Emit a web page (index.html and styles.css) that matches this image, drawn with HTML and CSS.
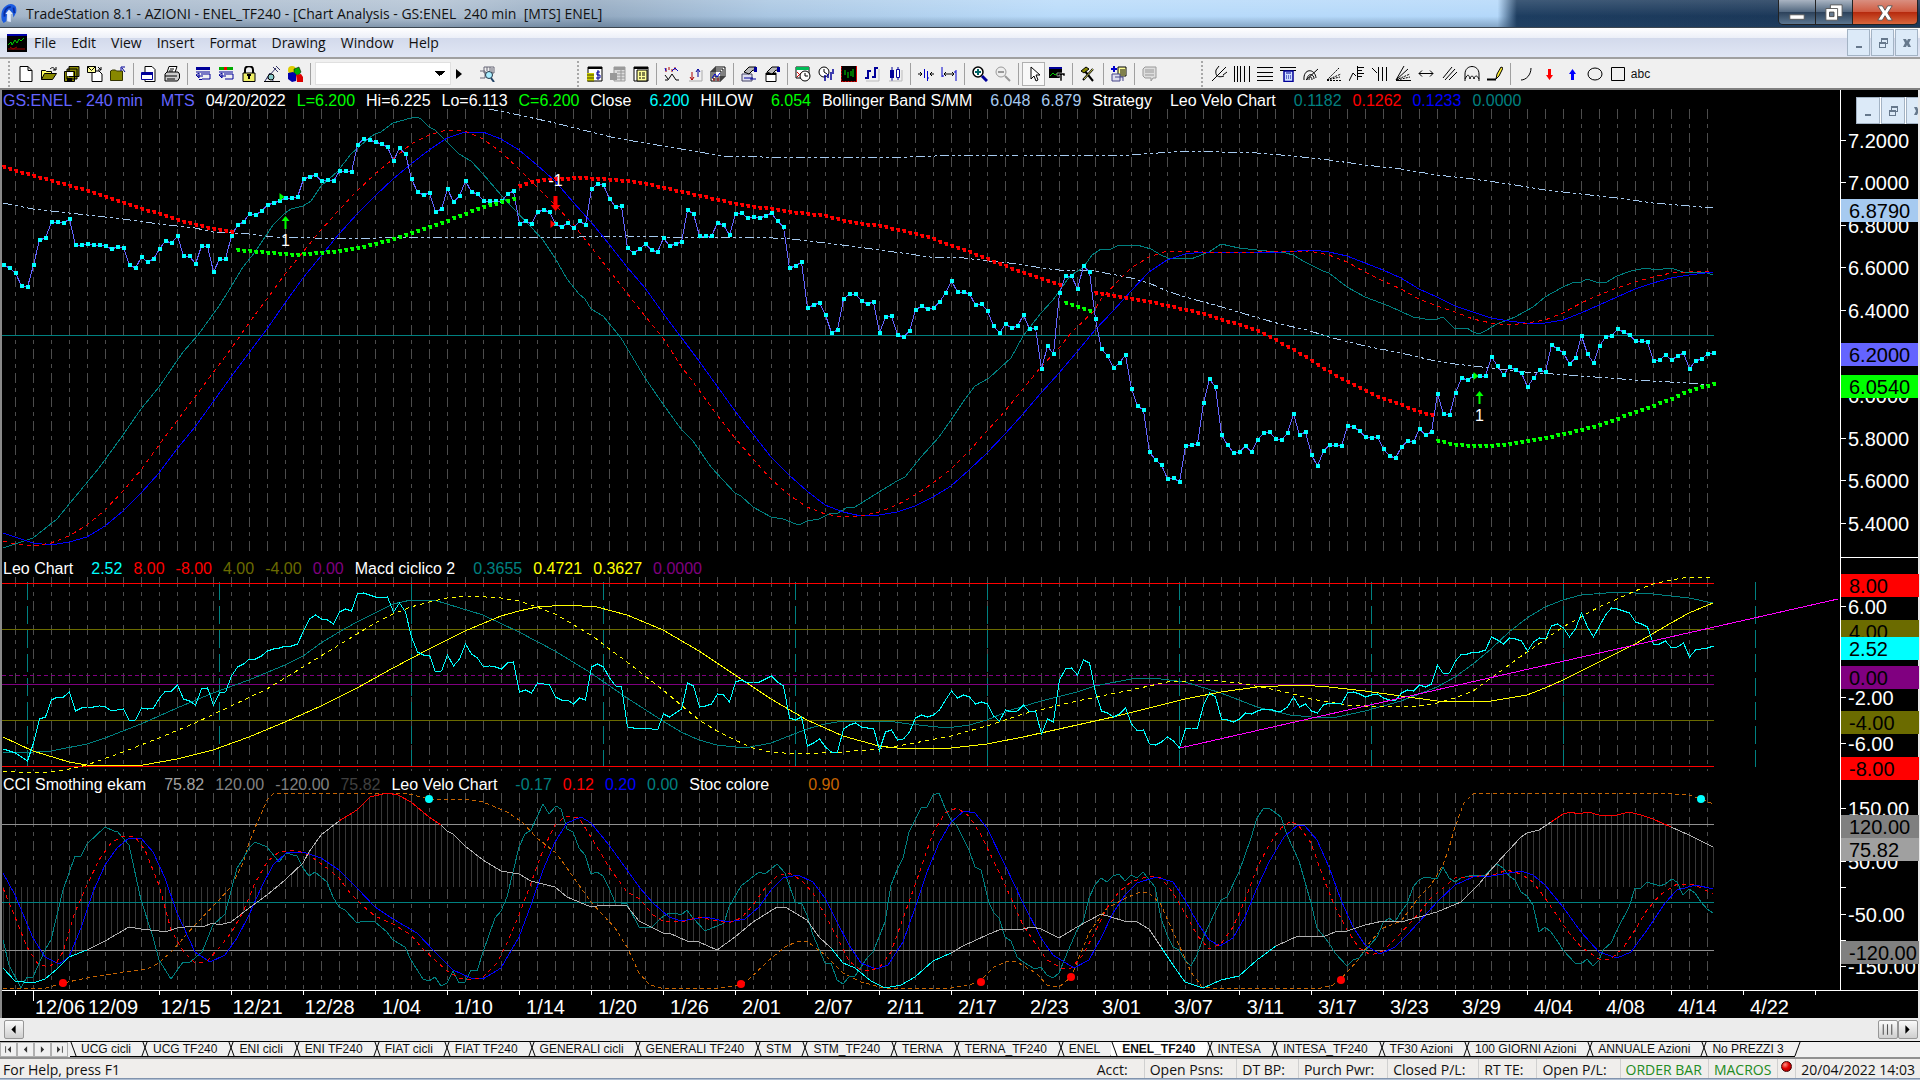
FILE: index.html
```html
<!DOCTYPE html>
<html lang="en">
<head>
  <meta charset="UTF-8" />
  <title>TradeStation 8.1 - AZIONI - ENEL_TF240</title>
  <link rel="stylesheet" href="styles.css">
</head>
<body>

  <!-- window title -->
  <header class="titlebar">
    <svg class="logo" viewBox="0 0 20 24"><path d="M2 19C0 9 4 2 12 1c5 0 7 4 6 9l-3 6-1-5-3-3-3 3-1 9-3 2z" fill="#1a5ae0"/><path d="M5 15C4 9 7 4 12 4M15 5l1 6" stroke="#0a2c9c" stroke-width="2" fill="none"/><path d="M8 20v-8H6l4-5 4 5h-2v9z" fill="#dfeaff"/></svg>
    <h1>TradeStation 8.1 - AZIONI - ENEL_TF240 - [Chart Analysis - GS:ENEL&nbsp; 240 min&nbsp; [MTS] ENEL]</h1>
    <div class="window-buttons">
      <button aria-label="Minimize"><svg viewBox="0 0 20 20"><path d="M2 12h16v5H2z" fill="#fff" stroke="#555"/></svg></button>
      <button aria-label="Restore"><svg viewBox="0 0 20 20"><path d="M6 1h13v13H6z" fill="#fff" stroke="#555"/><path d="M1 5h13v13H1z" fill="#fff" stroke="#555"/><path d="M5 9h5v5H5z" fill="#667a90" stroke="#444"/></svg></button>
      <button class="close" aria-label="Close"><svg viewBox="0 0 20 20"><path d="M2 2h5l3 5 3-5h5l-5 8 5 8h-5l-3-5-3 5H2l5-8z" fill="#fff" stroke="#555"/></svg></button>
    </div>
  </header>

  <!-- menu -->
  <nav class="menubar">
    <svg class="doc-icon" viewBox="0 0 20 18"><path d="M0 0h20v18H0z" fill="#000"/><path d="M0 0h20v2H0z" fill="#00a"/><path d="M1 11l3-3 1 3 3-5 2 3 2-4 2 2 3-3" stroke="#0c0" fill="none"/><path d="M1 15h17M3 13l3 2 4-2" stroke="#900" fill="none"/></svg>
    <a href="#">File</a>
    <a href="#">Edit</a>
    <a href="#">View</a>
    <a href="#">Insert</a>
    <a href="#">Format</a>
    <a href="#">Drawing</a>
    <a href="#">Window</a>
    <a href="#">Help</a>
    <div class="mdi-buttons">
      <button aria-label="Minimize chart"><svg viewBox="0 0 12 12"><path d="M3 9h6v2H3z"/></svg></button>
      <button aria-label="Restore chart"><svg viewBox="0 0 12 12"><path d="M4 1h7v6H9v4H2V5h2zM5 3v2h4v1h1V3zM3 7v3h5V7z" fill-rule="evenodd"/></svg></button>
      <button aria-label="Close chart"><svg viewBox="0 0 12 12"><path d="M2 2h3l1 2 1-2h3L8 6l2 4H7L6 8l-1 2H2l2-4z"/></svg></button>
    </div>
  </nav>

  <!-- toolbars -->
  <div class="toolbars">
    <div class="toolbar bar-file">
      <i class="grip"></i>
      <button aria-label="New"><svg viewBox="0 0 16 16"><path d="M2 .5h8l4 4v11H2zM10 .5v4h4" fill="#fff" stroke="#000"/></svg></button>
      <button aria-label="Open"><svg viewBox="0 0 16 16"><path d="M.5 13.5v-9h4l1 1h5v2" fill="#ff6" stroke="#000"/><path d="M.5 13.5l3-6h12l-4 6z" fill="#880" stroke="#000"/><path d="M9 3c2-2 4-2 5 1M12 4h3V1" fill="none" stroke="#000"/></svg></button>
      <button aria-label="Save all"><svg viewBox="0 0 16 16"><path d="M5 .5h10v10H5z M3 3h10v10H3z M.5 5.500h10v10h-10z" fill="#880" stroke="#000"/><path d="M3 6h6v4H3z" fill="#fff"/><path d="M3 12h5v3H3z" fill="#000"/></svg></button>
      <button aria-label="Mail"><svg viewBox="0 0 16 16"><path d="M5 5h7l3 3v7.500H5z" fill="#fff" stroke="#000"/><path d="M.5.5h8v6h-8z" fill="#ff9" stroke="#000"/><path d="M.5.5l4 4 4-4M11 1l3 3M14 1v3h-3" fill="none" stroke="#000"/></svg></button>
      <button aria-label="Folder up"><svg viewBox="0 0 16 16"><path d="M.5 14.500V5l2-1h3l1 1h6v9.500z" fill="#880" stroke="#330"/><path d="M15 6l-3-4M11 5V1h4" fill="none" stroke="#009"/></svg></button>
      <i class="sep"></i>
      <button aria-label="Preview"><svg viewBox="0 0 16 16"><path d="M4 .5h7l3 3v12H4z" fill="#fff" stroke="#000"/><path d="M.5 6.500h11v7H.5z" fill="#fff" stroke="#009"/><path d="M1 6h11v3H1z" fill="#009"/></svg></button>
      <button aria-label="Print"><svg viewBox="0 0 16 16"><path d="M5 .5h8l-2 6H3z" fill="#fff" stroke="#000"/><path d="M1 8l2-2h11l1.500 2v4l-2 3H1z" fill="#ccc" stroke="#000"/><path d="M1 10h12M3 13h8M6 3h4M5 5h4" stroke="#000"/></svg></button>
      <i class="sep"></i>
      <button aria-label="Undo list"><svg viewBox="0 0 16 16"><path d="M1 1h14v3H1z" fill="#009"/><path d="M1 6h14M6 8h9v5H7M7 13.500H4M1 9l3-2v5zM2 10l6 0" fill="none" stroke="#009"/></svg></button>
      <button aria-label="Color list"><svg viewBox="0 0 16 16"><path d="M1 1h14v3H1z" fill="#0a0"/><path d="M6 1h3v3H6z" fill="#e00"/><path d="M1 6h14M6 8h9v5H7M1 9l3-2v5zM2 10h6" fill="none" stroke="#009"/></svg></button>
      <button aria-label="Lock"><svg viewBox="0 0 16 16"><path d="M4 7V4c0-5 8-5 8 0v3" fill="none" stroke="#000" stroke-width="2"/><path d="M2 7h12v8.500H2z" fill="#ee6" stroke="#000"/><path d="M6 9h4M8 9v4" stroke="#000" stroke-width="2"/></svg></button>
      <button aria-label="Signal"><svg viewBox="0 0 16 16"><path d="M1 15l5-8 3 8M5 10l7-8M9 1l5 5M12 0l4 4M3 12h6" fill="none" stroke="#336"/><circle cx="7" cy="11" r="3" fill="#8cc" stroke="#000"/><path d="M0 15.500h16" stroke="#000"/></svg></button>
      <button aria-label="Blocks"><svg viewBox="0 0 16 16"><circle cx="5" cy="4" r="4" fill="#dc0"/><path d="M7 3l5-2 2 5-3 4-4-2z" fill="#0a0" stroke="#000" stroke-width=".5"/><path d="M1 7l5-1 3 2v7l-4 1-4-3z" fill="#00a"/><path d="M9 9l5-1 2 3v5h-6z" fill="#d00"/></svg></button>
      <i class="sep"></i>
      <select aria-label="Symbol"><option></option></select>
      <button class="narrow" aria-label="Go"><svg viewBox="0 0 16 16"><path d="M5 3l6 5-6 5z"/></svg></button>
      <button aria-label="Find symbol"><svg viewBox="0 0 16 16"><path d="M1 5h5v7H1M5 1h10v6H5zM8 1v4M11 1v4M13 2v5" fill="#eee" stroke="#667"/><circle cx="10" cy="9" r="3.500" fill="#aef" stroke="#234"/><path d="M12 12l3 4" stroke="#246" stroke-width="2"/></svg></button>
    </div>

    <div class="toolbar bar-chart">
      <i class="grip"></i>
      <button aria-label="Data"><svg viewBox="0 0 16 16"><path d="M1 1h14v14H1z" fill="#fff" stroke="#000"/><path d="M1 1h14v2H1z"/><path d="M0 7h7v8H0z" fill="#cc0"/><path d="M0 9h7M0 12h7M0 15h7" stroke="#440"/><path d="M13 6h-3v3h3v3h-4M11 4v10" fill="none" stroke="#009"/></svg></button>
      <button aria-label="Table" disabled><svg viewBox="0 0 16 16"><path d="M4 1h11v14H4z" fill="#ddd" stroke="#999"/><path d="M4 1h11v3H4zM0 7h7v7H0z" fill="#999"/><path d="M7 6h8M7 9h8M7 12h8M11 4v11" stroke="#999"/></svg></button>
      <button aria-label="Grid"><svg viewBox="0 0 16 16"><path d="M1 1h14v14H1z" fill="#fff" stroke="#000"/><path d="M1 1h14v2H1z"/><path d="M4 4h10v11H4z" fill="#ff9" stroke="#000"/><path d="M6 7h2M9 7h3M6 9h2M9 9h3M6 12h2M9 12h3" stroke="#000"/></svg></button>
      <i class="sep"></i>
      <button aria-label="Indicator"><svg viewBox="0 0 16 16"><path d="M2 2v4M5 1v3M8 3v3M11 1v3" stroke="#a00"/><path d="M1 2l1 3M8 5l3-3 3 3" stroke="#00c" fill="none"/><path d="M1 14h3l4-6 4 6h3M1 9l3 4" stroke="#000" fill="none"/></svg></button>
      <button aria-label="Strategy"><svg viewBox="0 0 16 16"><path d="M5 6v8M3 11l2 3 2-3" stroke="#a00" fill="none"/><path d="M11 3v8M9 6l2-3 2 3" stroke="#009" fill="none"/><path d="M2 15h13V4" stroke="#aaa" fill="none"/></svg></button>
      <button aria-label="Layers"><svg viewBox="0 0 16 16"><path d="M5 1h10v10H5zM3 3h10v10H3zM1 5h10v10H1z" fill="#fff" stroke="#000"/><path d="M2 12l3-4 2 3 3-4" stroke="#00c" fill="none"/><path d="M4 12v3M8 12v3" stroke="#a00"/></svg></button>
      <i class="sep"></i>
      <button aria-label="Format symbol"><svg viewBox="0 0 16 16"><path d="M1 8h10v7H1z" fill="#dde" stroke="#446"/><path d="M3 6l5-5h7v4l-3-1-4 4z" fill="#bbb" stroke="#000"/><path d="M13 1h3v5h-3z" fill="#009"/><path d="M3 12h9M9 13h6" stroke="#009"/></svg></button>
      <button aria-label="Format window"><svg viewBox="0 0 16 16"><path d="M2 7h10v8.500H2z" fill="#fff" stroke="#000"/><path d="M2 7h10v2H2z"/><path d="M3 6l5-5h7v4l-3-1-4 4z" fill="#bbb" stroke="#000"/><path d="M13 1h3v5h-3z" fill="#009"/></svg></button>
      <i class="sep"></i>
      <button aria-label="Calendar"><svg viewBox="0 0 16 16"><path d="M1 1h13v11H1z" fill="#fff" stroke="#000"/><path d="M1 1h13v3H1z" fill="#0b5"/><path d="M2 6l5 5M7 6l-5 5" stroke="#d00"/><circle cx="10" cy="10" r="5" fill="#fff" stroke="#000"/><path d="M10 7v3h3" stroke="#000" fill="none"/></svg></button>
      <button aria-label="Session time"><svg viewBox="0 0 16 16"><circle cx="6" cy="6" r="5" fill="#fff" stroke="#000"/><path d="M6 3v3l3 2" stroke="#000" fill="none"/><path d="M7 9v6M10 8v4M13 6v8M15 3v5" stroke="#009" stroke-width="1.500"/></svg></button>
      <button aria-label="Bars"><svg viewBox="0 0 16 16"><path d="M0 0h16v16H0z" fill="#000"/><path d="M.5.5v15h15" stroke="#d00" fill="none" stroke-dasharray="2 1"/><path d="M15.500 0v16" stroke="#d00"/><path d="M4 4v5M7 6v6M10 5v5M12 3v8" stroke="#0d0"/></svg></button>
      <button aria-label="OHLC"><svg viewBox="0 0 16 16"><path d="M4 4v9M1 12h3M4 5h3M11 1v11M8 11h3M11 2h3" stroke="#009" stroke-width="2"/><path d="M15 3v12H2" stroke="#bbb" fill="none"/></svg></button>
      <button aria-label="Candles"><svg viewBox="0 0 16 16"><path d="M5 1v14M11 1v13" stroke="#009"/><path d="M3 4h4v8H3z" fill="#009"/><path d="M9.500 3.500h3v8h-3z" fill="#fff" stroke="#009"/><path d="M15 4v11H2" stroke="#bbb" fill="none"/></svg></button>
      <i class="sep"></i>
      <button aria-label="Tighter bars"><svg viewBox="0 0 16 16"><path d="M0 8h4M2 6l2 2-2 2M16 8h-4M14 6l-2 2 2 2" stroke="#000" fill="none"/><path d="M6.500 3v9M9.500 5v10M9 12h2" stroke="#00c"/></svg></button>
      <button aria-label="Wider bars"><svg viewBox="0 0 16 16"><path d="M3 8h10M5 6L3 8l2 2M11 6l2 2-2 2" stroke="#000" fill="none"/><path d="M1 1v10M1 10h2M15 4v11M13 6h2" stroke="#00c"/></svg></button>
      <i class="sep"></i>
      <button aria-label="Zoom in"><svg viewBox="0 0 16 16"><circle cx="6" cy="6" r="5" fill="#fff" stroke="#000" stroke-width="1.500"/><path d="M3 6h6M6 3v6" stroke="#066" stroke-width="2"/><path d="M10 10l5 5" stroke="#009" stroke-width="3"/></svg></button>
      <button aria-label="Zoom out" disabled><svg viewBox="0 0 16 16"><circle cx="6" cy="6" r="5" fill="#eee" stroke="#999"/><path d="M3 6h6" stroke="#999" stroke-width="2"/><path d="M10 10l5 5" stroke="#999" stroke-width="2"/></svg></button>
      <i class="sep"></i>
      <button class="pressed" aria-label="Pointer"><svg viewBox="0 0 16 16"><path d="M5 1v12l3-3 2 5 2-1-2-5h4z" fill="#fff" stroke="#000"/></svg></button>
      <button aria-label="Chart text"><svg viewBox="0 0 16 16"><path d="M0 1h13v11H0z" fill="#000"/><path d="M0 1h13v2H0z" fill="#009"/><path d="M1 10l3-3 2 2 3-2 3 2" stroke="#0c0" fill="none"/><path d="M8 7h8v3h-2V9h-1v6h-2V9h-1v1H8z" stroke="#fff" stroke-width=".5"/></svg></button>
      <i class="sep"></i>
      <button aria-label="Tools"><svg viewBox="0 0 16 16"><path d="M4 4l9 11M13 3L3 14" stroke="#000" stroke-width="2"/><path d="M1 5l5-4 3 2-5 4z" fill="#880" stroke="#000"/><path d="M13 3L4 13" stroke="#cc5"/></svg></button>
      <i class="sep"></i>
      <button aria-label="Add grid"><svg viewBox="0 0 16 16"><path d="M7 1h8v9H7z" fill="#ff9" stroke="#000"/><path d="M9 4h5M9 6h5M9 8h5" stroke="#000"/><path d="M0 3h6M3 0v6" stroke="#00c" stroke-width="2"/><path d="M1 8h8v7H1zM4 11h8v4" fill="#dde" stroke="#448"/></svg></button>
      <i class="sep"></i>
      <button aria-label="Notes" disabled><svg viewBox="0 0 16 16"><path d="M3 1h11v11h-3l-2 3v-3H3l-2-2V3z" fill="#ddd" stroke="#999"/><path d="M3 4h9M3 6h9M3 9h9" stroke="#999"/></svg></button>
    </div>

    <div class="toolbar bar-draw">
      <i class="grip"></i>
      <button aria-label="Pitchfork"><svg viewBox="0 0 16 16"><path d="M1 15L8 8M5 4c-1 6 2 8 8 6M6 10l9-9M5 4l3-4M12 9l4-3" stroke="#000" fill="none"/></svg></button>
      <button aria-label="Time lines"><svg viewBox="0 0 16 16"><path d="M.5 0v16M3.500 0v16M6.500 0v16M10.500 0v16M15.500 0v16" stroke="#000"/></svg></button>
      <button aria-label="Price lines"><svg viewBox="0 0 16 16"><path d="M0 1.500h16M0 6.500h16M0 10.500h16M0 14.500h16" stroke="#000"/></svg></button>
      <button aria-label="Calculator"><svg viewBox="0 0 16 16"><path d="M0 1.500h16M0 4.500h16" stroke="#000"/><path d="M4 5h9v10.500H4z" fill="#cdf" stroke="#009" stroke-width="1.500"/><path d="M6 7h5M6 10h1M8 10h1M10 10h1M6 12h1M8 12h1M10 12h1" stroke="#009"/></svg></button>
      <button aria-label="Arcs"><svg viewBox="0 0 16 16"><path d="M1 14C0 2 12 2 13 12M4 14c0-7 7-7 7-1M6 14c0-4 3-4 3 0M3 14L15 3" stroke="#000" fill="none"/></svg></button>
      <button aria-label="Speed lines"><svg viewBox="0 0 16 16"><path d="M1 14.500h14M1 14L13 2M1 14L15 8M1 14l13-3" stroke="#000" stroke-dasharray="2 1"/></svg></button>
      <button aria-label="Retracement"><svg viewBox="0 0 16 16"><path d="M0 15l4-8 3 3M8.500 0v14M8 1.500h7M8 4.500h5M8 7.500h7M8 10.500h5" stroke="#000" fill="none"/></svg></button>
      <button aria-label="Time ratio"><svg viewBox="0 0 16 16"><path d="M0 2l5 5M6.500 1v14M10.500 1v14M14.500 1v14" stroke="#000" fill="none"/></svg></button>
      <button aria-label="Fan"><svg viewBox="0 0 16 16"><path d="M1 14.500h15M1 14L9 0M1 14L13 3" stroke="#000"/><path d="M1 14L15 8M2 14l13-3" stroke="#000" stroke-dasharray="2 1"/></svg></button>
      <button aria-label="Extend"><svg viewBox="0 0 16 16"><path d="M1 7.500h14M4 4.500l-3 3 3 3M12 4.500l3 3-3 3" stroke="#000" fill="none"/></svg></button>
      <button aria-label="Channel"><svg viewBox="0 0 16 16"><path d="M2 12L11 1M4 14L14 3M8 14l8-8" stroke="#000"/></svg></button>
      <button aria-label="Cycle"><svg viewBox="0 0 16 16"><path d="M1 15V8c0-10 14-10 14 0v7M1 13c3-6 4-4 5 0 1-4 3-4 4 0 1-4 3-4 5 0" stroke="#000" fill="none"/></svg></button>
      <button aria-label="Pencil"><svg viewBox="0 0 16 16"><path d="M0 13.500h9" stroke="#000" stroke-width="2"/><path d="M9 13l1-5 4-7 2 1-4 8z" fill="#fe3" stroke="#000"/></svg></button>
      <i class="sep"></i>
      <button aria-label="Arc"><svg viewBox="0 0 16 16"><path d="M3 14c5 0 10-5 10-12" stroke="#000" fill="none"/></svg></button>
      <button aria-label="Down arrow"><svg viewBox="0 0 16 16"><path d="M7 3h3v6h2l-3.500 5L5 9h2z" fill="#f00"/></svg></button>
      <button aria-label="Up arrow"><svg viewBox="0 0 16 16"><path d="M7 14h3V8h2L8.500 3 5 8h2z" fill="#00f"/></svg></button>
      <button aria-label="Ellipse"><svg viewBox="0 0 16 16"><ellipse cx="8" cy="8" rx="7" ry="6" stroke="#000" fill="none"/></svg></button>
      <button aria-label="Rectangle"><svg viewBox="0 0 16 16"><path d="M1.500 1.500h13v13h-13z" stroke="#000" fill="none"/></svg></button>
      <button class="text-tool">abc</button>
    </div>
  </div>

  <!-- chart analysis window -->
  <main class="chart">
    <section class="panel panel-price">
      <svg id="price"></svg>
      <div class="legend">
        <span class="violet">GS:ENEL - 240 min</span>
        <span class="violet wide">MTS</span>
        <span>04/20/2022</span>
        <span class="lime">L=6.200</span>
        <span>Hi=6.225</span>
        <span>Lo=6.113</span>
        <span class="lime">C=6.200</span>
        <span>Close</span>
        <span class="cyan wide">6.200</span>
        <span>HILOW</span>
        <span class="lime wide">6.054</span>
        <span>Bollinger Band S/MM</span>
        <span class="sky wide">6.048</span>
        <span class="sky">6.879</span>
        <span>Strategy</span>
        <span class="wide">Leo Velo Chart</span>
        <span class="teal wide">0.1182</span>
        <span class="red">0.1262</span>
        <span class="blue">0.1233</span>
        <span class="teal">0.0000</span>
      </div>
      <div class="mdi-buttons floating">
        <button aria-label="Minimize panel"><svg viewBox="0 0 12 12"><path d="M3 9h6v2H3z"/></svg></button>
        <button aria-label="Restore panel"><svg viewBox="0 0 12 12"><path d="M4 1h7v6H9v4H2V5h2zM5 3v2h4v1h1V3zM3 7v3h5V7z" fill-rule="evenodd"/></svg></button>
        <button aria-label="Close panel"><svg viewBox="0 0 12 12"><path d="M2 2h3l1 2 1-2h3L8 6l2 4H7L6 8l-1 2H2l2-4z"/></svg></button>
      </div>
    </section>

    <section class="panel panel-leo">
      <svg id="leo"></svg>
      <div class="legend">
        <span>Leo Chart</span>
        <span class="cyan wide">2.52</span>
        <span class="red">8.00</span>
        <span class="red">-8.00</span>
        <span class="olive">4.00</span>
        <span class="olive">-4.00</span>
        <span class="purple">0.00</span>
        <span>Macd ciclico 2</span>
        <span class="teal wide">0.3655</span>
        <span class="yellow">0.4721</span>
        <span class="yellow">0.3627</span>
        <span class="purple">0.0000</span>
      </div>
    </section>

    <section class="panel panel-cci">
      <svg id="cci"></svg>
      <div class="legend">
        <span>CCI Smothing ekam</span>
        <span class="silver wide">75.82</span>
        <span class="gray">120.00</span>
        <span class="gray">-120.00</span>
        <span class="dark">75.82</span>
        <span>Leo Velo Chart</span>
        <span class="teal wide">-0.17</span>
        <span class="red">0.12</span>
        <span class="blue">0.20</span>
        <span class="teal">0.00</span>
        <span>Stoc colore</span>
        <span class="orange wider">0.90</span>
      </div>
    </section>

    <svg id="dates"></svg>
  </main>

  <div class="scrollbar">
    <button aria-label="Scroll left"><svg viewBox="0 0 16 16"><path d="M10 4v8L6 8z"/></svg></button>
    <span class="track"></span>
    <button class="thumb" aria-label="Scroll thumb"><svg viewBox="0 0 16 16"><path d="M4 3v10M8 3v10M12 3v10" stroke="#555"/></svg></button>
    <button aria-label="Scroll right"><svg viewBox="0 0 16 16"><path d="M6 4v8l4-4z"/></svg></button>
  </div>

  <div class="tabs">
    <button class="nav" aria-label="First"><svg viewBox="0 0 16 16"><path d="M11 4v8L7 8zM4 4h1v8H4z"/></svg></button>
    <button class="nav" aria-label="Previous"><svg viewBox="0 0 16 16"><path d="M10 4v8L6 8z"/></svg></button>
    <button class="nav" aria-label="Next"><svg viewBox="0 0 16 16"><path d="M6 4v8l4-4z"/></svg></button>
    <button class="nav" aria-label="Last"><svg viewBox="0 0 16 16"><path d="M5 4v8l4-4zM11 4h1v8h-1z"/></svg></button>
    <div class="tab-list">
      <button class="tab">UCG cicli</button>
      <button class="tab">UCG TF240</button>
      <button class="tab">ENI cicli</button>
      <button class="tab">ENI TF240</button>
      <button class="tab">FIAT cicli</button>
      <button class="tab">FIAT TF240</button>
      <button class="tab">GENERALI cicli</button>
      <button class="tab">GENERALI TF240</button>
      <button class="tab">STM</button>
      <button class="tab">STM_TF240</button>
      <button class="tab">TERNA</button>
      <button class="tab">TERNA_TF240</button>
      <button class="tab">ENEL</button>
      <button class="tab active">ENEL_TF240</button>
      <button class="tab">INTESA</button>
      <button class="tab">INTESA_TF240</button>
      <button class="tab">TF30 Azioni</button>
      <button class="tab">100 GIORNI Azioni</button>
      <button class="tab">ANNUALE Azioni</button>
      <button class="tab">No PREZZI 3</button>
    </div>
  </div>

  <footer class="status">
    <span class="help">For Help, press F1</span>
    <span class="acct">Acct:</span>
    <span>Open Psns:</span>
    <span>DT BP:</span>
    <span>Purch Pwr:</span>
    <span>Closed P/L:</span>
    <span>RT TE:</span>
    <span>Open P/L:</span>
    <span class="green">ORDER BAR</span>
    <span class="green">MACROS</span>
    <span class="lamp"><i></i></span>
    <span class="clock">20/04/2022 14:03</span>
  </footer>
  <div class="taskbar"></div>

  <script src="chart.js"></script>
</body>
</html>
```
FILE: styles.css
```css
* {
  box-sizing: border-box;
}
body {
  margin: 0;
  height: 100vh;
  display: flex;
  flex-direction: column;
  overflow: hidden;
  background-color: #f0f0f0;
  font-family: 'Open Sans', 'Noto Sans', sans-serif;
  font-size: 14px;
  color: #111;
}
button {
  border: 0;
  padding: 0;
  background: none;
  font: inherit;
  color: inherit;
}
a {
  color: inherit;
  text-decoration: none;
}

/* title bar */
.titlebar {
  flex: none;
  height: 28px;
  display: flex;
  align-items: center;
  background:
    linear-gradient(to bottom, rgba(255,255,255,0.15), rgba(255,255,255,0) 60%, rgba(40,70,100,0.35)),
    linear-gradient(to right, #a3b5c9, #b3c3d4 22%, #93a9c0 31%, #a9c6e2 40%, #b9dbfa 55%, #b4d8fa 78%, #1d3d60 79%, #1a3555);
  border-bottom: 1px solid #3c4650;
}
.logo {
  width: 18px;
  height: 24px;
  margin-right: 8px;
}
.titlebar h1 {
  margin: 0;
  flex: 1;
  font-size: 14px;
  font-weight: normal;
  line-height: 28px;
  white-space: nowrap;
}
.window-buttons {
  display: flex;
  align-self: flex-start;
  height: 25px;
  margin-right: 2px;
  border: 1px solid #222;
  border-top: 0;
  border-radius: 0 0 5px 5px;
  overflow: hidden;
}
.window-buttons button {
  width: 37px;
  background: linear-gradient(#a9b4c2, #51677f 50%, #2b4059 50%, #5c7690);
  border-right: 1px solid #222;
}
.window-buttons button.close {
  width: 64px;
  border-right: 0;
  background: linear-gradient(#d98f80, #cf5a40 50%, #b5280c 50%, #d8663c);
}
.window-buttons svg {
  width: 18px;
  height: 18px;
  vertical-align: middle;
}

/* menu */
.menubar {
  flex: none;
  height: 31px;
  display: flex;
  align-items: center;
  gap: 15px;
  background: linear-gradient(#ffffff, #eceff8 34%, #d3daec 36%, #e0e6f4 96%);
  border-bottom: 2px solid #a0a0a0;
}
.doc-icon {
  width: 20px;
  height: 18px;
  margin: 0 -8px 0 7px;
}
.mdi-buttons {
  display: flex;
  gap: 1px;
  height: 27px;
  margin-left: auto;
  margin-right: 2px;
}
.mdi-buttons button {
  width: 23px;
  background-color: #dceaf8;
  border: 1px solid #a3b3c4;
}
.mdi-buttons svg {
  display: block;
  width: 12px;
  height: 12px;
  margin: auto;
  fill: #66788c;
}
.mdi-buttons.floating {
  position: absolute;
  top: 7px;
  right: -14px;
  background-color: #fff;
}
.mdi-buttons.floating button {
  width: 24px;
}

/* toolbars */
.toolbars {
  flex: none;
  height: 31px;
  display: flex;
  background-color: #f0f0f0;
  border-bottom: 2px solid #808080;
}
.toolbar {
  display: flex;
  align-items: center;
}
.toolbar button {
  flex: none;
  width: 23px;
  height: 24px;
}
.toolbar svg {
  display: block;
  width: 16px;
  height: 16px;
  margin: auto;
}
.toolbar button.narrow {
  width: 16px;
  margin-right: 8px;
}
.toolbar button.pressed {
  border: 1px solid #b0b0b0;
  background-color: #f8f8f8;
}
.toolbar button.text-tool {
  font-family: 'Liberation Sans', Arial, sans-serif;
  font-size: 12px;
}
.toolbar select {
  width: 136px;
  height: 23px;
  margin-left: 1px;
  appearance: none;
  border: 1px solid #e0e0e0;
  border-radius: 0;
  background:
    conic-gradient(from -45deg at 50% 100%, #000 90deg, #fff 0) right 5px center / 10px 5px no-repeat,
    #fff;
}
.bar-file {
  margin-left: 8px;
  margin-right: 79px;
}
.bar-draw {
  margin-left: 40px;
}
.grip {
  width: 3px;
  height: 26px;
  margin-right: 3px;
  border-left: 2px dotted #a8a8a8;
}
.sep {
  width: 1px;
  height: 22px;
  margin: 0 3px 0 4px;
  background-color: #a0a0a0;
}

/* chart */
.chart {
  flex: 1;
  min-height: 0;
  display: flex;
  flex-direction: column;
  background-color: #000;
  border-left: 2px solid #8a8a8a;
  border-right: 2px solid #e8e8e8;
  font-family: 'Liberation Sans', Arial, sans-serif;
  color: #fff;
}
.panel {
  position: relative;
  min-height: 0;
}
.panel-price {
  flex: 468;
  overflow: hidden;
}
.panel-leo,
.panel-cci {
  flex: 216;
}
.panel > svg {
  display: block;
  width: 100%;
  height: 100%;
  overflow: visible;
}
#dates {
  display: block;
  flex: none;
  width: 100%;
  height: 28px;
}
.chart text {
  fill: #fff;
  font-size: 20px;
}
.chart text.small {
  font-size: 16px;
}
.chart text.on-tag {
  fill: #000;
}
.legend {
  position: absolute;
  top: 1px;
  left: 1px;
  display: flex;
  gap: 11px;
  font-size: 16px;
  line-height: 20px;
  white-space: nowrap;
}
.legend .wide {
  margin-left: 7px;
}
.legend .wider {
  margin-left: 28px;
}
.violet { color: #6464ff; }
.lime { color: #00ff00; }
.cyan { color: #00ffff; }
.sky { color: #a6caf0; }
.teal { color: #008080; }
.red { color: #ff0000; }
.blue { color: #0000ff; }
.olive { color: #6b6b00; }
.purple { color: #800080; }
.yellow { color: #ffff00; }
.silver { color: #a0a0a0; }
.gray { color: #808080; }
.dark { color: #404040; }
.orange { color: #c86400; }

/* scrollbar */
.scrollbar {
  flex: none;
  height: 23px;
  display: flex;
  align-items: center;
  padding: 0 2px 0 4px;
  background-color: #ececec;
}
.scrollbar .track {
  flex: 1;
}
.scrollbar button {
  width: 20px;
  height: 19px;
  border: 1px solid #979797;
  border-radius: 2px;
  background: linear-gradient(#fafafa, #cfcfcf);
}
.scrollbar svg {
  display: block;
  width: 17px;
}

/* workspace tabs */
.tabs {
  flex: none;
  height: 18px;
  display: flex;
  border-top: 1px solid #000;
  border-bottom: 2px solid #909090;
  font-family: 'Liberation Sans', Arial, sans-serif;
  font-size: 12px;
  line-height: 14px;
  white-space: nowrap;
}
.tabs .nav {
  width: 17px;
  border: 1px solid #b0b0b0;
  fill: #333;
}
.tabs .nav svg {
  display: block;
  height: 13px;
  margin: auto;
}
.tab-list {
  display: flex;
  margin-left: 2px;
}
.tab {
  position: relative;
  padding: 0 11px;
  border-bottom: 1px solid #000;
}
.tab::before,
.tab::after {
  content: "";
  position: absolute;
  top: 0;
  bottom: 0;
  width: 1px;
  background-color: #000;
}
.tab::before {
  left: 3px;
  transform: skewX(20deg);
}
.tab::after {
  right: -3px;
  transform: skewX(-20deg);
}
.tab.active {
  background-color: #fff;
  font-weight: bold;
}

/* status bar */
.status {
  flex: none;
  height: 19px;
  display: flex;
  line-height: 21px;
  background-color: #f0eeec;
  white-space: nowrap;
}
.status span {
  padding: 0 13px 0 5px;
  border-left: 1px solid #d0d0d0;
}
.status .help {
  flex: 1;
  padding-left: 3px;
  border-left: 0;
}
.status .acct {
  border-left: 0;
  padding-right: 16px;
}
.status .green {
  padding-right: 6px;
  color: #228b22;
}
.status .lamp {
  padding: 0 3px;
}
.status .clock {
  padding-right: 5px;
}
.lamp i {
  display: block;
  width: 11px;
  height: 11px;
  margin-top: 2px;
  border: 1px solid #400;
  border-radius: 50%;
  background: radial-gradient(circle at 35% 30%, #ff9080, #e00000 45%, #900000);
}
.taskbar {
  flex: none;
  height: 2px;
  background: linear-gradient(to bottom, #6b7f9b, #c4d2e4);
}
```
FILE: chart.js
```js
// All series are kept on a 1916 wide drawing grid and scaled to the window in draw()
const BAR = 6, FIRST = 3.5, LAST = 1713.5, AXIS = 1840;

const close = [
  265,268,273,286,287,265,240,238,222,222,223,219,245,245,244,245,245,246,249,247,
  248,265,268,257,262,259,249,241,243,236,256,256,264,246,246,272,259,259,236,225,
  222,214,215,211,205,203,201,198,198,197,179,177,175,181,180,181,171,171,172,145,
  139,140,142,144,147,161,148,154,179,192,195,193,212,209,189,202,196,181,192,194,
  201,201,201,201,194,191,224,221,224,212,210,212,224,227,223,228,221,225,189,184,
  185,199,207,206,248,253,249,244,250,252,238,246,244,242,210,214,236,236,236,223,
  225,235,214,213,218,217,218,216,213,221,227,268,266,262,308,305,303,315,333,330,
  299,294,294,301,304,302,333,317,316,335,337,331,310,306,309,308,302,293,281,292,
  292,294,305,304,311,326,333,324,328,326,315,329,328,369,346,354,293,276,276,289,
  266,272,319,349,356,368,363,355,389,406,410,452,460,465,479,478,482,446,445,444,
  403,379,387,435,445,453,452,446,452,440,433,432,439,440,433,414,435,432,455,466,
  451,445,445,446,426,427,431,437,438,437,449,456,458,447,441,442,429,435,432,394,
  414,415,393,378,380,376,376,376,357,366,375,367,370,373,387,378,370,372,345,349,
  353,364,358,336,354,363,346,337,336,329,332,335,341,341,342,361,360,355,360,356,
  353,369,361,359,354,353
];

const leo = [
  749,751,753,757,761,743,719,717,700,697,697,692,711,708,707,707,706,707,711,710,
  709,721,720,708,709,708,698,691,691,685,699,701,705,689,688,705,693,692,676,667,
  664,659,659,656,651,649,648,646,646,644,631,619,615,619,620,624,612,609,611,594,
  593,595,597,598,597,612,603,612,637,652,655,655,672,671,655,666,659,644,654,658,
  667,666,667,669,663,662,692,690,693,683,684,685,697,700,700,704,698,700,667,664,
  667,678,686,687,727,728,728,728,729,730,714,717,713,709,683,686,707,706,704,694,
  695,702,682,680,683,682,682,679,676,682,686,718,720,717,746,743,739,747,752,752,
  729,725,723,727,728,728,750,732,730,740,739,732,718,715,717,715,710,700,691,698,
  695,697,704,702,704,716,721,710,712,711,705,712,711,734,719,722,680,669,668,675,
  660,663,692,711,713,717,714,708,724,731,730,744,745,742,737,741,748,729,728,728,
  705,693,697,719,720,722,719,713,714,711,709,709,711,711,707,697,707,704,711,713,
  705,703,703,704,693,692,694,697,695,694,698,700,701,693,690,691,685,687,684,665,
  674,673,661,654,654,652,652,650,637,640,644,638,639,641,651,642,638,639,626,624,
  628,637,629,613,627,637,626,615,608,609,611,613,622,624,627,644,644,641,648,647,
  643,657,650,649,648,646
];

// HILOW stop dots
const hilow = [
  ['#f00', '3,167 33,176 51,181 69,186 87,191 105,197 123,203 141,209 159,214 177,220 195,225 213,229 232,232'],
  ['#0f0', '237,250 255,252 273,253 297,255 321,253 339,251 357,248 375,244 393,239 411,233 429,227 447,221 465,214 483,207 501,202 514,199'],
  ['#f00', '519,186 531,182 543,180 561,179 579,178 597,179 615,180 633,182 651,185 663,188 681,192 699,196 717,200 735,204 753,207 771,209 789,212 807,214 825,216 843,221 861,224 879,226 897,230 915,234 933,239 951,246 969,252 987,259 1005,266 1023,273 1041,279 1060,285'],
  ['#0f0', '1065,303 1090,311'],
  ['#f00', '1095,293 1113,296 1131,299 1149,302 1167,306 1185,310 1203,314 1221,320 1239,325 1257,331 1275,340 1293,350 1305,357 1311,361 1329,372 1347,382 1365,391 1383,399 1401,405 1419,412 1434,416'],
  ['#0f0', '1437,441 1455,445 1473,446 1491,446 1509,444 1527,441 1545,438 1563,434 1581,430 1599,425 1617,419 1635,412 1653,406 1671,399 1689,391 1701,387 1714,384']
];

const bollMid = '3,203 33,209 87,215 123,219 159,224 195,228 213,232 249,234 273,237 315,238 379,238 442,237 579,237 627,236 663,237 753,237 792,239 825,243 850,246 879,250 909,254 930,257 964,258 989,261 1019,264 1041,268 1059,270 1095,271 1131,278 1149,283 1167,291 1185,297 1215,305 1245,314 1280,324 1307,330 1329,337 1365,346 1401,353 1431,360 1455,364 1491,368 1525,372 1581,376 1635,380 1688,383 1713,385';
const bollTop = '489,109 519,115 555,123 591,132 615,138 657,145 699,152 723,156 762,157 909,157 935,156 1019,155 1131,155 1158,153 1185,151 1221,152 1257,153 1293,156 1329,160 1365,165 1401,169 1437,175 1473,179 1509,184 1545,190 1581,194 1617,198 1653,203 1713,208';

const velo = {
  teal: '3,548 15,544 33,538 57,519 75,497 99,468 123,435 141,409 159,387 183,352 198,335 219,306 231,287 243,267 255,252 273,225 285,213 291,209 303,206 311,201 321,186 337,172 351,154 369,138 375,134 381,132 393,123 411,118 417,117 421,119 429,127 435,130 447,142 459,154 471,161 483,174 501,195 513,208 531,227 543,240 555,258 567,279 579,294 585,299 591,309 603,316 621,338 627,348 645,378 663,404 681,429 693,441 711,467 735,493 741,496 753,507 771,517 783,519 796,524 801,524 807,521 819,519 831,513 838,513 846,508 855,507 879,492 897,481 905,477 921,457 939,437 951,420 963,402 975,386 989,378 1011,358 1023,336 1041,313 1053,300 1065,283 1071,275 1083,268 1092,255 1101,249 1111,249 1119,245 1128,246 1137,245 1151,249 1161,255 1168,258 1191,259 1209,252 1221,244 1239,248 1257,250 1276,252 1286,253 1293,255 1305,262 1323,271 1329,273 1347,287 1365,297 1389,306 1413,317 1425,319 1437,319 1443,317 1455,329 1467,328 1473,332 1479,334 1485,331 1497,324 1515,317 1533,307 1545,297 1563,287 1572,283 1581,282 1587,279 1599,283 1607,282 1617,276 1631,271 1646,268 1656,270 1671,268 1683,272 1701,272 1707,273 1713,275',
  red: '3,541 15,544 33,546 51,543 69,536 87,525 105,510 123,491 141,470 159,445 177,421 195,397 213,373 231,349 249,323 267,299 285,274 303,252 321,230 339,210 357,191 375,174 393,159 411,144 429,135 447,130 465,131 483,139 501,152 519,169 537,187 555,205 573,224 591,247 609,270 627,293 645,316 663,338 681,366 699,390 717,415 735,438 753,459 771,479 789,495 807,507 825,514 843,517 861,516 879,512 897,505 915,495 933,483 951,469 969,451 987,431 1005,411 1023,389 1041,367 1059,348 1071,333 1095,310 1101,299 1119,280 1131,268 1149,257 1167,251 1185,251 1203,252 1257,252 1309,251 1329,255 1347,262 1365,272 1383,281 1401,289 1419,299 1437,306 1455,312 1473,319 1491,323 1509,325 1527,323 1545,320 1563,313 1581,303 1599,295 1617,288 1635,282 1653,277 1671,273 1689,272 1713,271',
  blue: '3,533 15,537 33,543 51,545 69,542 87,537 105,526 123,511 141,493 159,473 177,449 195,427 213,402 231,377 249,353 267,329 285,303 303,278 321,256 339,234 357,214 375,196 393,179 411,164 429,150 447,138 465,132 483,132 501,139 519,150 537,165 555,181 573,202 591,222 609,244 627,267 645,288 663,313 681,337 699,361 717,386 735,411 753,434 771,457 789,475 807,491 825,505 843,512 861,516 879,515 897,512 915,506 933,497 951,486 969,470 987,453 1005,434 1023,414 1041,393 1059,373 1077,352 1095,330 1113,311 1131,291 1149,272 1167,260 1185,254 1203,252 1281,252 1313,250 1329,252 1347,256 1365,263 1383,270 1401,278 1419,289 1437,297 1455,306 1473,312 1491,318 1509,321 1533,324 1545,323 1563,320 1581,313 1599,305 1617,297 1635,289 1653,283 1671,278 1689,275 1713,272'
};

const macd = {
  teal: '3,752 33,752 51,751 87,744 105,738 141,724 177,708 213,693 249,680 285,665 303,656 321,643 339,632 357,622 375,613 393,604 411,600 434,600 447,604 483,615 519,632 555,651 591,673 627,698 663,721 681,732 699,740 717,745 745,748 771,743 807,729 825,724 843,721 867,722 888,721 909,724 947,728 969,725 987,720 1011,710 1041,701 1077,692 1095,686 1131,679 1153,678 1185,682 1221,693 1257,707 1290,715 1311,717 1337,717 1365,711 1401,701 1437,687 1455,677 1473,664 1491,649 1509,632 1527,618 1545,607 1563,600 1581,595 1619,592 1653,594 1689,598 1713,603',
  fast: '3,771 33,773 51,772 69,769 87,765 123,752 159,738 195,723 231,706 267,689 303,667 339,645 375,623 393,614 411,607 429,602 447,598 471,596 501,598 519,601 537,607 555,614 591,635 627,662 663,690 681,705 699,720 717,731 735,740 753,748 771,752 796,754 842,752 879,749 909,744 951,736 987,726 1023,714 1077,701 1131,690 1167,682 1209,680 1239,683 1276,690 1293,694 1311,699 1347,705 1382,707 1419,706 1437,703 1455,698 1473,691 1491,678 1527,652 1563,627 1599,607 1635,591 1653,584 1671,580 1689,577 1711,577',
  slow: '3,737 33,751 69,762 87,765 109,766 143,765 177,759 213,750 249,737 285,722 321,706 357,688 393,668 429,649 465,631 501,616 519,611 537,607 567,605 597,607 627,615 663,630 699,651 735,675 771,699 807,720 843,736 879,746 897,748 922,749 951,748 987,744 1023,737 1059,729 1113,717 1149,708 1185,699 1221,692 1257,687 1300,685 1329,687 1365,691 1401,696 1437,701 1473,702 1491,701 1527,695 1545,688 1563,680 1599,662 1635,644 1671,623 1689,613 1713,603'
};

const cci = {
  line: '3,968 15,981 33,983 45,979 57,969 69,957 87,950 105,941 129,927 141,929 159,931 168,931 177,928 194,926 202,927 213,923 219,925 231,922 249,908 267,895 285,880 303,863 309,852 321,835 339,821 357,810 370,797 387,793 398,795 411,802 429,817 441,825 447,831 453,834 465,846 483,860 501,871 519,874 531,881 555,887 567,897 591,907 603,905 627,906 639,921 663,933 669,933 687,941 699,942 717,950 735,937 753,922 777,907 785,907 807,920 819,937 831,948 843,963 855,968 871,981 885,988 901,985 915,977 933,961 951,953 963,946 987,935 999,930 1023,929 1032,927 1041,929 1059,938 1077,927 1101,914 1124,921 1137,922 1149,929 1161,947 1173,965 1185,982 1203,988 1221,980 1239,976 1257,960 1276,946 1298,936 1323,937 1335,932 1347,931 1365,925 1383,921 1401,922 1419,917 1437,912 1449,907 1461,902 1479,884 1496,864 1509,850 1521,837 1527,833 1539,830 1551,822 1563,814 1571,812 1578,814 1588,812 1599,815 1617,815 1629,812 1641,815 1653,819 1671,827 1689,835 1713,847',
  teal: '3,940 9,965 21,988 27,977 33,977 45,950 51,940 63,890 75,856 81,856 87,844 105,827 114,831 117,831 129,845 141,900 153,937 159,960 171,979 183,962 189,963 202,952 213,925 225,914 237,868 243,859 249,848 255,842 267,847 279,862 286,853 297,856 303,868 309,876 315,872 327,882 333,897 339,907 345,910 357,923 363,921 375,922 387,932 393,940 405,947 411,960 423,979 429,981 435,977 441,986 447,983 453,971 459,983 465,982 471,970 477,971 483,952 495,918 501,911 507,897 513,872 519,847 525,834 531,830 543,804 549,814 556,806 561,809 567,829 573,832 579,848 585,855 591,874 597,872 603,876 609,888 615,902 627,904 639,927 651,928 661,918 669,913 675,913 681,915 687,910 693,918 705,931 717,926 724,923 729,907 741,886 759,872 765,874 777,864 785,873 795,902 802,904 807,915 813,935 825,963 831,963 837,980 843,984 849,977 855,976 867,958 873,952 885,922 891,885 897,870 903,858 909,832 921,808 927,807 933,795 939,793 945,808 951,820 957,826 969,850 975,867 981,870 989,903 994,913 999,918 1005,937 1011,941 1017,957 1023,962 1035,969 1041,967 1047,975 1053,978 1059,973 1065,958 1077,930 1083,922 1089,898 1095,885 1101,878 1107,882 1113,876 1119,874 1125,881 1131,875 1137,878 1143,872 1155,887 1161,918 1167,935 1173,947 1179,950 1185,960 1191,966 1197,955 1203,938 1215,912 1221,900 1227,897 1239,872 1251,838 1257,818 1263,809 1269,808 1281,817 1287,835 1299,861 1311,903 1317,928 1329,943 1335,953 1347,966 1353,960 1359,958 1377,937 1383,923 1389,918 1395,922 1401,912 1407,904 1413,887 1419,880 1425,877 1437,879 1443,867 1449,878 1455,882 1461,878 1473,875 1485,875 1497,864 1503,868 1509,876 1515,880 1521,892 1527,896 1533,905 1539,932 1545,927 1551,932 1558,942 1563,950 1575,963 1581,964 1587,959 1593,966 1599,960 1603,950 1611,943 1617,930 1629,907 1635,888 1641,888 1647,882 1660,886 1665,884 1672,879 1677,882 1683,895 1689,889 1695,893 1701,902 1707,909 1713,913',
  red: '3,888 15,917 27,947 38,964 48,967 57,962 63,952 75,912 87,885 99,860 111,843 123,836 135,837 145,850 159,885 171,930 183,951 195,963 206,962 219,948 231,933 243,912 255,883 267,862 279,852 295,850 309,855 327,868 339,878 351,894 363,906 375,916 393,924 411,935 423,949 435,960 447,971 459,978 471,980 483,977 497,963 507,943 519,915 531,883 543,850 555,825 566,816 579,818 591,837 609,867 627,892 640,899 653,915 663,921 681,922 699,917 717,921 729,923 741,918 753,905 765,888 777,876 789,873 801,880 813,893 825,915 837,937 849,961 859,969 869,971 880,967 891,952 897,935 909,902 921,868 933,833 945,813 957,808 969,816 981,835 999,872 1011,898 1023,925 1035,943 1047,960 1063,969 1071,968 1083,955 1095,932 1107,908 1119,892 1131,882 1149,876 1161,878 1173,893 1185,913 1197,935 1209,949 1221,944 1233,927 1245,900 1257,868 1269,845 1281,828 1291,821 1299,826 1311,843 1323,877 1335,907 1347,930 1359,948 1371,955 1383,951 1401,933 1419,913 1431,898 1443,888 1455,878 1479,876 1496,874 1507,870 1521,874 1533,882 1545,898 1558,917 1569,933 1581,947 1599,959 1611,959 1623,948 1635,930 1647,910 1660,895 1677,884 1692,884 1701,888 1713,894',
  blue: '3,873 15,895 33,938 45,957 59,964 69,957 81,928 93,892 105,865 117,848 129,838 141,838 153,852 165,878 177,913 195,952 210,962 225,955 237,938 249,915 261,888 273,865 286,853 303,852 321,858 339,870 357,888 375,907 393,919 417,933 435,952 453,970 471,978 483,979 501,968 519,937 531,905 543,870 555,842 567,823 581,817 591,823 609,845 627,870 640,888 653,903 669,917 681,921 705,917 729,922 745,919 759,907 771,890 783,878 798,875 813,882 825,898 837,922 849,945 861,963 876,969 888,965 903,942 915,908 927,872 939,843 951,822 964,811 975,813 987,828 1005,865 1023,903 1041,938 1053,955 1074,968 1089,960 1101,938 1113,913 1125,895 1137,883 1156,877 1173,882 1185,900 1197,922 1209,940 1220,946 1233,938 1245,917 1257,888 1269,862 1284,837 1298,825 1305,826 1317,840 1329,867 1341,900 1353,927 1365,945 1380,954 1395,947 1407,935 1419,922 1437,902 1455,885 1473,877 1491,876 1521,871 1533,875 1545,885 1563,907 1581,932 1599,952 1617,958 1631,952 1647,930 1665,903 1677,890 1696,885 1713,889',
  stoc: '3,988 46,988 63,983 87,978 123,972 147,969 159,963 171,952 195,925 219,900 231,887 243,863 249,843 255,828 267,800 274,793 405,793 429,799 465,799 483,802 507,812 522,822 537,838 556,853 567,868 591,902 615,928 627,947 639,973 650,985 661,988 720,988 739,985 747,981 768,961 785,947 798,941 808,942 825,955 843,973 861,982 884,988 951,988 972,984 981,980 994,967 1008,961 1017,962 1036,973 1047,985 1059,987 1071,977 1089,933 1107,908 1128,897 1141,892 1149,893 1160,903 1170,925 1179,945 1191,972 1202,987 1212,988 1321,988 1333,985 1341,979 1358,960 1370,942 1383,928 1401,921 1411,908 1419,897 1431,885 1443,865 1449,848 1455,827 1464,803 1474,793 1660,793 1689,795 1701,799 1713,804'
};

const dates = ['12/15','12/21','12/28','1/04','1/10','1/14','1/20','1/26','2/01','2/07','2/11','2/17','2/23','3/01','3/07','3/11','3/17','3/23','3/29','4/04','4/08','4/14','4/22'];

const parse = s => s.split(' ').map(p => p.split(',').map(Number));
const bars = ys => ys.map((y, i) => [FIRST + BAR * i, y]);

// y of a series at any x
function valueAt(pts, x) {
  for (let i = 1; i < pts.length; i++) {
    if (x <= pts[i][0]) {
      const [x0, y0] = pts[i - 1], [x1, y1] = pts[i];
      return y0 + (y1 - y0) * (x - x0) / (x1 - x0);
    }
  }
  return pts[pts.length - 1][1];
}

function plot(id, top, height) {
  const svg = document.getElementById(id);
  const box = svg.getBoundingClientRect();
  const X = x => (x - 2) * box.width / 1916;
  const Y = y => (y - top) * box.height / height;
  let out = '';
  return {
    line(pts, color, dash = '', width = 1) {
      const d = pts.map(([x, y]) => X(x).toFixed(1) + ',' + Y(y).toFixed(1)).join(' ');
      out += `<polyline points="${d}" fill="none" stroke="${color}" stroke-width="${width}" stroke-dasharray="${dash}" shape-rendering="crispEdges"/>`;
    },
    rect(x, y, w, h, color) {
      out += `<rect x="${X(x)}" y="${Y(y)}" width="${w}" height="${h}" fill="${color}" shape-rendering="crispEdges"/>`;
    },
    dot(x, y, color) {
      out += `<circle cx="${X(x)}" cy="${Y(y)}" r="4" fill="${color}"/>`;
    },
    shape(x, y, d, color) {
      out += `<path transform="translate(${X(x)} ${Y(y)})" d="${d}" fill="${color}"/>`;
    },
    text(x, y, str, cls = '', anchor = 'start') {
      out += `<text x="${X(x)}" y="${Y(y) + (cls === 'small' ? 6 : 7)}" class="${cls}" text-anchor="${anchor}">${str}</text>`;
    },
    grid(from, to) {
      for (let x = 15.5; x < LAST; x += 18) this.line([[x, from], [x, to]], '#4c4c4c', '10 5 4 5');
    },
    level(y, color, dash) {
      this.line([[2, y], [LAST, y]], color, dash);
    },
    tick(y, str) {
      this.line([[AXIS, y], [AXIS + 6, y]], '#fff');
      if (str) this.text(1848, y, str);
    },
    tag(y, str, color) {
      this.rect(AXIS + 1, y, 78, 23, color);
      this.text(1849, y + 12, str, 'on-tag');
    },
    done() { svg.innerHTML = out; }
  };
}

function drawPrice() {
  const p = plot('price', 90, 468);
  p.grid(109, 555);
  p.level(335.5, '#008080');
  p.line(parse(bollMid), '#a6caf0', '9 3 3 3 3 3');
  p.line(parse(bollTop), '#a6caf0', '9 3 3 3 3 3');
  p.line(parse(velo.teal), '#008080');
  p.line(parse(velo.blue), '#0000ff');
  p.line(parse(velo.red), '#ff0000', '4 4');
  const pts = bars(close);
  p.line(pts, '#6464ff');
  pts.forEach(([x, y]) => p.rect(x - 2, y - 2, 4, 4, '#0ff'));
  hilow.forEach(([color, s]) => {
    const stop = parse(s);
    for (let x = FIRST; x <= stop[stop.length - 1][0]; x += BAR) {
      if (x < stop[0][0]) continue;
      const y = Math.round(valueAt(stop, x));
      p.rect(x - 2, y - 2, 4, 2, color);
      p.rect(x - 1, y - 2, 3, 4, color);
    }
  });
  // entries and exits
  const up = 'M0 0l4 5H1v8h-2V5h-3z', down = 'M0 15l-5-6h3V0h4v9h3z', flag = 'M-2-4l5 4-5 4z';
  p.shape(285.5, 216, up, '#0f0');
  p.shape(281.5, 197, flag, '#0f0');
  p.text(285.5, 240, '1', 'small', 'middle');
  p.shape(555.5, 196, down, '#f00');
  p.shape(552.5, 224, flag, '#f00');
  p.text(555.5, 180, '-1', 'small', 'middle');
  p.shape(1479.5, 391, up, '#0f0');
  p.shape(1475.5, 376, flag, '#0f0');
  p.text(1479.5, 415, '1', 'small', 'middle');

  p.line([[AXIS, 90], [AXIS, 558]], '#fff');
  p.line([[AXIS, 557.5], [1918, 557.5]], '#fff');
  [[140.5, '7.2000'], [182.5, '7.0000'], [225.5, '6.8000'], [267.5, '6.6000'], [310.5, '6.4000'], [395.5, '6.0000'],
   [438.5, '5.8000'], [480.5, '5.6000'], [523.5, '5.4000']].forEach(t => p.tick(...t));
  p.tag(199, '6.8790', '#a6caf0');
  p.tag(343, '6.2000', '#6464ff');
  p.tag(375, '6.0540', '#00ff00');
  p.done();
}

function drawLeo() {
  const p = plot('leo', 558, 216);
  p.grid(577, 771);
  for (let x = 27.5; x < AXIS; x += 192) p.line([[x, 582], [x, 767]], '#008080', '18 6');
  p.level(583.5, '#ff0000');
  p.level(629.5, '#6b6b00');
  p.level(675.5, '#800080', '4 3');
  p.level(684.5, '#800080');
  p.level(720.5, '#6b6b00');
  p.level(766.5, '#ff0000');
  p.line(parse(macd.teal), '#008080');
  p.line(parse(macd.fast), '#ffff00', '4 4');
  p.line(parse(macd.slow), '#ffff00');
  p.line(bars(leo), '#00ffff');
  p.line([[1180, 748], [1838, 599]], '#ff00ff');

  p.line([[AXIS, 558], [AXIS, 774]], '#fff');
  p.tick(606.5, '6.00');
  p.tick(697.5, '-2.00');
  p.tick(743.5, '-6.00');
  p.tag(574, '8.00', '#ff0000');
  p.tag(620, '4.00', '#6b6b00');
  p.tag(637, '2.52', '#00ffff');
  p.tag(666, '0.00', '#800080');
  p.tag(711, '-4.00', '#6b6b00');
  p.tag(757, '-8.00', '#ff0000');
  p.done();
}

function drawCci() {
  const p = plot('cci', 774, 216);
  const pts = parse(cci.line);
  p.grid(793, 989);
  // histogram against the zero line
  for (let x = FIRST; x <= LAST; x += BAR) p.line([[x, 887], [x, valueAt(pts, x)]], '#383838');
  p.level(824.5, '#909090');
  p.level(902.5, '#008080');
  p.level(950.5, '#909090');
  p.line(parse(cci.stoc), '#c86400', '4 3');
  p.line(parse(cci.teal), '#008080');
  p.line(parse(cci.blue), '#0000ff');
  p.line(parse(cci.red), '#ff0000', '4 4');
  for (let i = 1; i < pts.length; i++) {
    const mid = (pts[i - 1][1] + pts[i][1]) / 2;
    p.line([pts[i - 1], pts[i]], mid < 824 ? '#ff0000' : mid > 950 ? '#00ffff' : '#b0b0b0');
  }
  [[429, 799], [1701, 799]].forEach(([x, y]) => p.dot(x, y, '#0ff'));
  [[63, 983], [741, 984], [981, 982], [1071, 977], [1341, 980]].forEach(([x, y]) => p.dot(x, y, '#f00'));

  p.line([[AXIS, 774], [AXIS, 990]], '#fff');
  p.tick(808.5, '150.00');
  p.tick(861.5, '50.00');
  p.tick(887.5);
  p.tick(914.5, '-50.00');
  p.tick(940.5);
  p.tick(966.5, '-150.00');
  p.tag(815, '120.00', '#808080');
  p.tag(838, '75.82', '#a0a0a0');
  p.tag(941, '-120.00', '#808080');
  p.done();
}

function drawDates() {
  const p = plot('dates', 990, 28);
  p.line([[2, 990.5], [1918, 990.5]], '#fff');
  p.line([[15.5, 990], [15.5, 995]], '#fff');
  p.line([[33.5, 990], [33.5, 1001]], '#fff');
  p.text(60, 1007, '12/06', '', 'middle');
  p.text(113, 1007, '12/09', '', 'middle');
  dates.forEach((d, i) => {
    const x = 159.5 + 72 * i;
    p.line([[x, 990], [x, 995]], '#fff');
    p.text(x + 26, 1007, d, '', 'middle');
  });
  p.line([[1815.5, 990], [1815.5, 995]], '#fff');
  p.done();
}

function draw() {
  drawPrice();
  drawLeo();
  drawCci();
  drawDates();
}

window.addEventListener('resize', draw);
draw();
```
